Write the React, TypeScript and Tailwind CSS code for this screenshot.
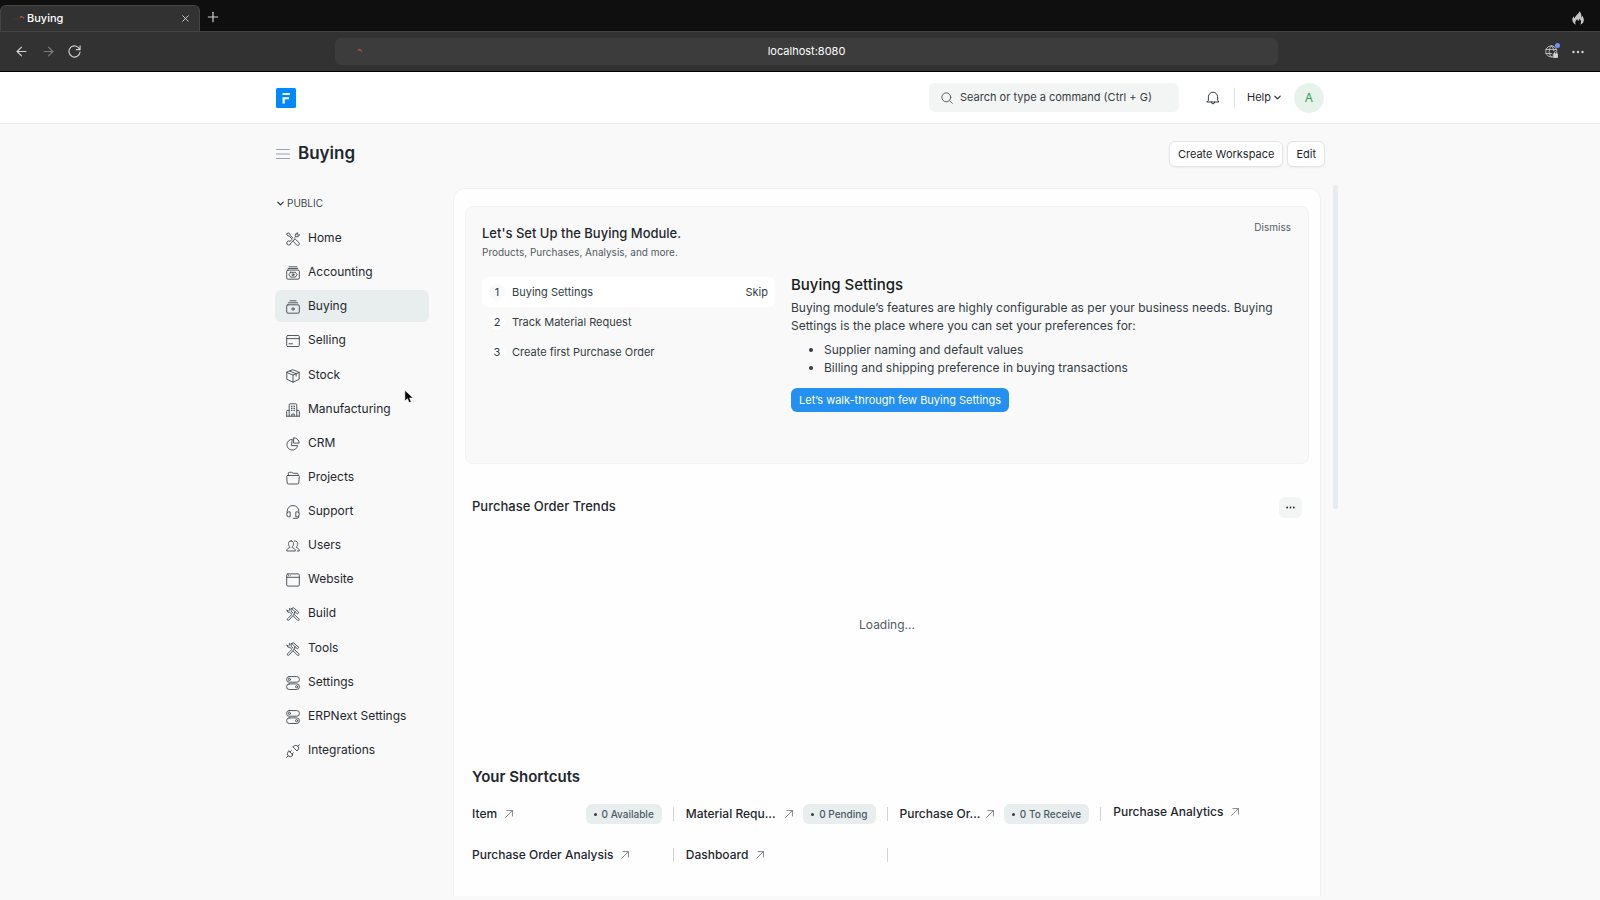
import type { ReactNode } from "react";
import { ArrowLeft, ArrowRight, ChevronDown, Plus, X } from "lucide-react";

function Icon({ children, className = "size-3.5" }: { children: ReactNode; className?: string }) {
  return (
    <svg
      viewBox="0 0 14 14"
      fill="none"
      stroke="currentColor"
      strokeWidth="0.9"
      strokeLinecap="round"
      strokeLinejoin="round"
      className={`shrink-0 ${className}`}
      aria-hidden="true"
    >
      {children}
    </svg>
  );
}

const homeIcon = (
  <>
    <path d="M8.4 6 9.8 4.6a2.3 2.3 0 0 1 2.1-3.7L10.8 2l.3 1 1 .3 1.2-1a2.4 2.4 0 0 1-3.6 2.3" />
    <path d="M5.7 7.8 4 9.4a2 2 0 1 0 .8 1.600L7.300 8.700" />
    <path d="M.8 2 2 .8l1.800.9.4 1.600 2.900 2.900M.8 2l.9 1.700 1.500.4 2.900 2.900" />
    <path d="m8.300 7.600 1-.4 3.600 3.400a1.600 1.600 0 0 1-2.300 2.300L7.200 9.400l.2-.9" />
  </>
);

const buildIcon = (
  <>
    <path d="m5.6 7.8-4.2 4a1 1 0 0 0 1.4 1.4l4.5-4.8M8 6.1l1.3-1.3M5.4 1.5 7.6.8l5.3 4.6-1.4 1.5-1.3-1-1-.9-2-2.2zM9 6.2 7.7 7.6" />
    <path d="M1 3.3 2.3 4l1.3-.9L3.3 1.5A2 2 0 0 1 5 4.2l1.8 1.7M1 3.3a2 2 0 0 0 2.8 2l2 1.9M8.5 7.7l4.4 4.1a1 1 0 0 1-1.5 1.4L7.2 9" />
  </>
);

const settingsIcon = (
  <>
    <rect x="0.6" y="0.6" width="12.8" height="5.6" rx="2.6" />
    <circle cx="3.4" cy="3.4" r="1.1" />
    <rect x="0.6" y="7.9" width="12.8" height="5.6" rx="2.6" />
    <circle cx="10.6" cy="10.7" r="1.1" />
  </>
);

const navItems: { label: string; icon: ReactNode }[] = [
  { label: "Home", icon: homeIcon },
  {
    label: "Accounting",
    icon: (
      <>
        <path d="M3 .8h8M2.200 2.500h9.600" />
        <rect x="0.7" y="4.1" width="12.6" height="9.1" rx="1.2" />
        <path d="M4.500 6.300h5q.3 1.600 1.800 2.400-1.500.8-1.800 2.400h-5q-.3-1.600-1.800-2.400 1.500-.8 1.800-2.400Z" />
        <circle cx="7" cy="8.7" r="1" />
      </>
    ),
  },
  {
    label: "Buying",
    icon: (
      <>
        <path d="M4 .8h6M2.3 2.8h9.4" />
        <rect x="0.7" y="4.8" width="12.6" height="8.4" rx="1.2" />
        <circle cx="7" cy="9" r="1.2" />
      </>
    ),
  },
  {
    label: "Selling",
    icon: (
      <>
        <rect x="0.7" y="1.5" width="12.6" height="11" rx="1.2" />
        <path d="M.7 4.6h12.6M3 9.8h3.5" />
      </>
    ),
  },
  {
    label: "Stock",
    icon: <path d="M7 .8 13.2 3.4v6.9L7 13.2.8 10.3V3.4zM.8 3.4 7 6.1l6.2-2.7M7 6.1v7.1M3.8 2.1l6.3 2.7v2.3" />,
  },
  {
    label: "Manufacturing",
    icon: (
      <>
        <path d="M3.2 13.2V1.8q0-1 1-1h5.6q1 0 1 1v11.4M.7 13.2h12.6M.7 13.2V8.4q0-1 1-1h1.5M13.3 13.2V8.4q0-1-1-1h-1.5M5.8 13v-2h2.4v2" />
        <path d="M5.5 3.1v5.8M7 3.1v5.8M8.5 3.1v5.8" strokeDasharray="0.5 1.5" />
      </>
    ),
  },
  {
    label: "CRM",
    icon: (
      <>
        <path d="M5.9 2.3a5.4 5.4 0 1 0 5.7 6.3H5.9z" />
        <path d="M8 .8a5.3 5.3 0 0 1 5.2 5.3H8z" />
      </>
    ),
  },
  {
    label: "Projects",
    icon: <path d="M2.3 4.2V2.3q0-1 1-1h2.5l1.2 1h4.2q1 0 1 1v.9M1.7 4.5h10.6q1.1 0 1 1l-.5 6.5q-.1 1-1.1 1H2.3q-1 0-1.1-1l-.5-6.5q0-1 1-1z" />,
  },
  {
    label: "Support",
    icon: <path d="M1.2 7.5V6.3a5.8 5.8 0 0 1 11.6 0v1.2M3.8 6.9H2.3q-1.5.1-1.5 2.5t1.5 2.4h1.5zM10.2 6.9h1.5q1.5.1 1.5 2.5t-1.5 2.4h-1.5zM12.7 11.2v.8q0 1.3-1.3 1.3H7.3" />,
  },
  {
    label: "Users",
    icon: (
      <>
        <path d="M5 1.9c1.6 0 2.5 1 2.5 2.8 0 1.5-.6 2.6-1.3 3.1v.8c1.3.5 2.9.9 3.2 3.4H.7c.3-2.5 1.8-2.9 3.1-3.4v-.8c-.7-.5-1.3-1.6-1.3-3.1C2.5 2.9 3.4 1.9 5 1.9Z" />
        <path d="M8.4 2.1c2-.6 3.300.6 3.300 2.600 0 1.500-.6 2.500-1.200 3v.9c1.300.5 2.600.9 2.800 3.400h-2" />
      </>
    ),
  },
  {
    label: "Website",
    icon: (
      <>
        <rect x="0.7" y="0.9" width="12.6" height="12.2" rx="1.2" />
        <path d="M.7 4.3h12.6M2.5 2.7h.1M4.2 2.7h.1" />
      </>
    ),
  },
  { label: "Build", icon: buildIcon },
  { label: "Tools", icon: buildIcon },
  { label: "Settings", icon: settingsIcon },
  { label: "ERPNext Settings", icon: settingsIcon },
  {
    label: "Integrations",
    icon: (
      <>
        <path d="m.6 13.4 1.6-1.6M3 7l4 4-1 1a2.7 2.7 0 0 1-3.8-.2A2.7 2.7 0 0 1 2 8zM4 8l1.3-1.3M6 10l1.3-1.3" />
        <path d="m13.4.6-1.6 1.6M7 3l4 4 1-1a2.7 2.7 0 0 0-.2-3.8A2.7 2.7 0 0 0 8 2z" />
      </>
    ),
  },
];

const steps = ["Buying Settings", "Track Material Request", "Create first Purchase Order"];

const shortcuts: { label: string; badge?: string; clipped?: boolean }[] = [
  { label: "Item", badge: "0 Available" },
  { label: "Material Requ...", badge: "0 Pending", clipped: true },
  { label: "Purchase Or...", badge: "0 To Receive", clipped: true },
  { label: "Purchase Analytics" },
  { label: "Purchase Order Analysis" },
  { label: "Dashboard" },
];

function LoadingMark() {
  return (
    <svg viewBox="0 0 14 14" fill="none" className="size-3.5 shrink-0" aria-hidden="true">
      <path d="M1 8q4-3 8 0" stroke="#3c3c3c" />
      <path d="M9 5.5q2-2 4 1" stroke="#c4552d" strokeWidth="1.2" />
    </svg>
  );
}

function BrowserChrome() {
  return (
    <header className="bg-[#0f0f0f] text-[#d4d4d4]">
      <div className="flex h-[31px] items-end">
        <div className="flex h-[26px] w-[200px] items-center rounded-t-md border border-b-0 border-[#444] bg-[#323232] pl-2.5 pr-2">
          <LoadingMark />
          <span className="ml-0.5 flex-1 text-[11px] font-medium text-white">Buying</span>
          <button aria-label="Close tab">
            <X className="size-[11px]" strokeWidth={2} />
          </button>
        </div>
        <button aria-label="New tab" className="mb-1.5 ml-[5px]">
          <Plus className="size-4" strokeWidth={1.75} />
        </button>
        <svg viewBox="0 0 12 14" className="mb-1.5 ml-auto mr-4 h-3.5 w-3 fill-[#c4c4c4]" aria-label="Clear data">
          <path d="M7.2.3C7.4 3.2 3.2 4 2.9 7.3 2.2 6.9 1.9 6.2 1.8 5.3.6 6.5.2 7.8.4 9.3.7 11.6 2.2 13 4 13.6 2.7 11.8 3.1 9.9 5.3 8c.1 1.2.6 1.6 1 1.9.8-.7 1.2-1.5 1.1-2.5 2 2 2.2 4.3.7 6.2 2-.6 3.500-2 3.700-4.200.2-2-.7-3.600-1.500-4.600 0 .8-.3 1.400-.8 1.800C9.600 4 9.200 1.700 7.200.3Z" />
        </svg>
      </div>
      <div className="flex h-[41px] items-center border-b border-t border-b-black border-t-[#444] bg-[#323232] px-3.5">
        <div className="flex w-[321px] items-center gap-3">
          <button aria-label="Back">
            <ArrowLeft className="size-[15px]" strokeWidth={1.75} />
          </button>
          <button aria-label="Forward" className="text-[#7d7d7d]">
            <ArrowRight className="size-[15px]" strokeWidth={1.75} />
          </button>
          <button aria-label="Reload">
            <Icon className="size-[13px]">
              <path d="M12.5 4.5A6 6 0 1 0 13 7.5M13 1v4H9" strokeWidth="1.2" />
            </Icon>
          </button>
        </div>
        <div className="flex h-[27px] flex-1 items-center rounded-md bg-[#3c3c3c] px-3.5">
          <LoadingMark />
          <input
            aria-label="Address"
            defaultValue="localhost:8080"
            className="min-w-0 flex-1 bg-transparent pr-3.5 text-center text-[11px] text-white outline-none"
          />
        </div>
        <div className="flex w-[308px] items-center justify-end gap-3.5 pr-0.5">
          <button aria-label="Site permissions" className="relative">
            <Icon className="size-[13px]">
              <path d="M8 12.8A6 6 0 1 1 12.8 6.5M.9 4.8h11M.9 9.2H7M7 .9C3.5 4.5 3.5 9.5 7 13M7 .9c1.5 1.6 2.3 3.3 2.5 5.2" />
              <path d="M9.3 9.5h4.2v4H9.3z" fill="currentColor" />
              <path d="M10.2 9.5V8.3a1.2 1.2 0 0 1 2.4 0v1.2" />
            </Icon>
            <span className="absolute -right-0.5 -top-0.5 size-[5px] rounded-full bg-[#6d93f8]" />
          </button>
          <button aria-label="Browser menu">
            <svg viewBox="0 0 12 4" className="h-1 w-3 fill-current">
              <circle cx="1.5" cy="2" r="1.2" />
              <circle cx="6" cy="2" r="1.2" />
              <circle cx="10.5" cy="2" r="1.2" />
            </svg>
          </button>
        </div>
      </div>
    </header>
  );
}

function Navbar() {
  return (
    <nav className="border-b border-[#ebeded] bg-white">
      <div className="mx-auto flex h-[51px] max-w-[1050px] items-center pl-px">
        <a href="#home" aria-label="Frappe home">
          <svg viewBox="0 0 20 20" className="size-5">
            <rect width="20" height="20" rx="1.5" fill="#0089ff" />
            <path d="M6.5 5h7.3v1.9H6.500zM6.500 9.300H13v1.900H8.800v4.200H6.500z" fill="#fff" />
          </svg>
        </a>
        <label className="ml-auto flex h-[29px] w-[250px] items-center rounded-md bg-[#f3f4f4] pl-3 pr-3 text-[#333c44]">
          <Icon className="size-3">
            <circle cx="6.2" cy="6.2" r="5.2" />
            <path d="m10.2 10.2 3 3" />
          </Icon>
          <input
            aria-label="Search"
            placeholder="Search or type a command (Ctrl + G)"
            className="ml-[7px] min-w-0 flex-1 bg-transparent text-[11px] outline-none placeholder:text-[#333c44]"
          />
        </label>
        <button aria-label="Notifications" className="ml-[27px]">
          <Icon>
            <path d="M1.2 11h11.6L11.6 9V5.8a4.6 4.6 0 0 0-9.2 0V9zM5.3 11a1.7 1.9 0 0 0 3.4 0" />
          </Icon>
        </button>
        <span className="ml-3.5 h-5 w-px bg-[#dce0e3]" />
        <button className="ml-3 flex items-center gap-px text-[11px]">
          Help
          <ChevronDown className="size-[11px]" strokeWidth={2.5} />
        </button>
        <button
          aria-label="Account"
          className="ml-[11px] mr-px size-[30px] rounded-full bg-[#e6f3ea] text-xs text-[#2f9e58]"
        >
          A
        </button>
      </div>
    </nav>
  );
}

function PageHead() {
  const button = "h-[26px] rounded-md border border-[#e2e5e8] bg-white px-2 text-[11px] leading-4 shadow-xs";
  return (
    <div className="flex h-[60px] items-center">
      <button aria-label="Toggle sidebar" className="pl-px text-[#8d99a6]">
        <Icon>
          <path d="M.5 2.5h13M.5 7h13M.5 11.5h13" />
        </Icon>
      </button>
      <h1 className="ml-2 flex-1 text-[17px] font-semibold">Buying</h1>
      <div className="flex gap-1">
        <button className={button}>Create Workspace</button>
        <button className={button}>Edit</button>
      </div>
    </div>
  );
}

function Sidebar() {
  return (
    <aside className="w-[154px] shrink-0 pt-[7px]">
      <button className="flex items-center gap-px text-[10px] leading-4 text-[#3d474f]">
        <ChevronDown className="size-[11px] text-[#1f272e]" strokeWidth={2.5} />
        PUBLIC
      </button>
      <ul className="mt-[11px] flex h-[544px] flex-col justify-between">
        {navItems.map(({ label, icon }) => (
          <li key={label}>
            <a
              href={`#${label}`}
              className={`flex h-8 items-center gap-2 rounded-md pl-[11px] text-xs ${
                label === "Buying" ? "bg-[#e8eeee]" : ""
              }`}
            >
              <span className="pt-0.5 text-[#3d474f]">
                <Icon>{icon}</Icon>
              </span>
              {label}
            </a>
          </li>
        ))}
      </ul>
    </aside>
  );
}

function Onboarding() {
  return (
    <section className="flex h-[258px] flex-col rounded-lg border border-[#f1f2f3] bg-[#f9f9f9] px-4 pt-4">
      <div className="flex items-start justify-between pr-px">
        <div>
          <h2 className="text-[13px] font-medium leading-5">Let's Set Up the Buying Module.</h2>
          <p className="text-[10px] leading-[18px] text-[#505a62]">Products, Purchases, Analysis, and more.</p>
        </div>
        <button className="text-[10px] leading-2 text-[#505a62]">Dismiss</button>
      </div>
      <div className="mt-4 flex gap-4">
        <ol className="w-[293px] shrink-0 text-[#333c44]">
          {steps.map((step, i) => (
            <li
              key={step}
              className={`flex h-[30px] items-center rounded-md px-[7px] text-[11px] ${i === 0 ? "bg-white" : ""}`}
            >
              <span
                className={`mr-[7px] grid size-4 place-items-center rounded-full ${
                  i === 0 ? "bg-[#f9f9f9]" : "bg-white"
                }`}
              >
                {i + 1}
              </span>
              <a href="#step" className="flex-1">
                {step}
              </a>
              {i === 0 && <button>Skip</button>}
            </li>
          ))}
        </ol>
        <div className="max-w-[490px] text-xs leading-[18px] text-[#333c44]">
          <h3 className="mb-1.5 text-[15px] font-medium leading-4 text-[#171c20]">Buying Settings</h3>
          <p>
            Buying module’s features are highly configurable as per your business needs. Buying Settings is the place
            where you can set your preferences for:
          </p>
          <ul className="mt-1.5 list-disc pl-[33px]">
            <li>Supplier naming and default values</li>
            <li>Billing and shipping preference in buying transactions</li>
          </ul>
          <button className="mt-[11px] h-6 rounded-md bg-[#2490ef] px-2 text-[11px] text-white">
            Let’s walk-through few Buying Settings
          </button>
        </div>
      </div>
    </section>
  );
}

function Shortcut({
  label,
  badge,
  clipped,
  last,
}: {
  label: string;
  badge?: string;
  clipped?: boolean;
  last: boolean;
}) {
  return (
    <div className="flex h-5 min-w-0 items-center">
      <a href={`#${label}`} className={`flex flex-1 items-center text-xs font-medium ${last ? "pb-1" : ""}`}>
        <span className="whitespace-nowrap">{label}</span>
        <Icon className={`size-2 text-[#6b747c] ${clipped ? "ml-auto" : "ml-2"}`}>
          <path d="M1 13 13 1M3.5 1H13v9.5" strokeWidth="1.5" />
        </Icon>
      </a>
      {badge && (
        <span className="ml-2.5 flex h-5 shrink-0 items-center rounded-md bg-[#e8eeee] px-2 text-[10px] font-medium text-[#4c5a67]">
          <span className="mr-[5px] size-[3px] rounded-full bg-[#333c44]" />
          {badge}
        </span>
      )}
      {!last && <span className="ml-[11px] h-3.5 w-px bg-[#cfd4d8]" />}
    </div>
  );
}

function Workspace() {
  return (
    <main className="relative ml-6 mr-1 flex min-w-0 flex-1 flex-col rounded-t-xl border border-b-0 border-[#eff1f2] bg-[#fefefe] px-[11px] pb-6 pt-[17px]">
      <Onboarding />
      <section className="px-[7px] pt-8">
        <div className="flex items-start justify-between">
          <h2 className="text-[13px] font-medium leading-5">Purchase Order Trends</h2>
          <button
            aria-label="Chart options"
            className="mt-px grid h-[21px] w-[23px] place-items-center rounded-md bg-[#f3f4f4]"
          >
            <svg viewBox="0 0 9 3" className="h-[3px] w-[9px] fill-current">
              <circle cx="1.2" cy="1.5" r="0.9" />
              <circle cx="4.5" cy="1.5" r="0.9" />
              <circle cx="7.8" cy="1.5" r="0.9" />
            </svg>
          </button>
        </div>
        <p className="grid h-[213px] place-items-center text-xs text-[#505a62]">Loading...</p>
      </section>
      <section className="px-[7px] pt-9">
        <h2 className="text-[15px] font-semibold leading-5">Your Shortcuts</h2>
        <div className="-mr-[13px] mt-[17px] grid grid-cols-4 gap-x-3 gap-y-[21px]">
          {shortcuts.map((shortcut, i) => (
            <Shortcut key={shortcut.label} {...shortcut} last={i === 3} />
          ))}
        </div>
      </section>
      {/* scroll thumb */}
      <span className="absolute -right-[18px] -top-1 h-[324px] w-[5px] rounded-full bg-[#e8ecee]" />
    </main>
  );
}

export default function App() {
  return (
    <div className="flex min-h-screen flex-col bg-[#f9f9f9] font-['Inter',sans-serif] text-[#1f272e]">
      <BrowserChrome />
      <Navbar />
      <div className="mx-auto flex w-full max-w-[1050px] flex-1 flex-col pb-1">
        <PageHead />
        <div className="flex flex-1 pt-1">
          <Sidebar />
          <Workspace />
        </div>
      </div>
      <svg viewBox="0 0 12 17" className="absolute left-[404px] top-[389px] h-[15px] w-2.5" aria-hidden="true">
        <path d="M1 1v13l3.2-2.8 2 4.7 2.5-1-2-4.6H11z" fill="#000" stroke="#fff" strokeWidth="0.8" />
      </svg>
    </div>
  );
}
